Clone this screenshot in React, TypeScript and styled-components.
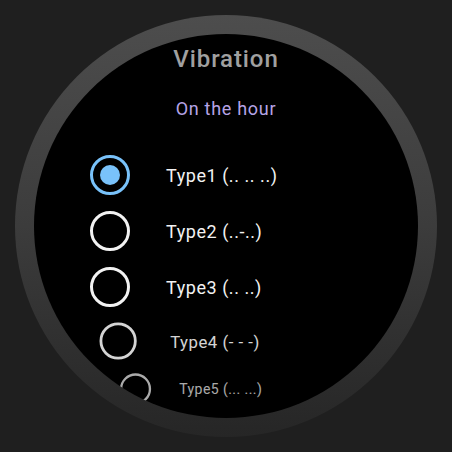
import React from 'react';
import styled, { createGlobalStyle } from 'styled-components';

const colors = {
  background: '#1f1f1f',
  screen: '#000000',
  title: '#a0a0a0',
  subtitle: '#b6a4e6',
  text: '#f2f2f2',
  accent: '#79c2fa',
};

const GlobalStyle = createGlobalStyle`
  html, body {
    margin: 0;
    padding: 0;
    background: ${colors.background};
  }
  body {
    font-family: Roboto, 'Noto Sans', sans-serif;
  }
`;

const Page = styled.div`
  width: 452px;
  height: 452px;
  display: flex;
  align-items: center;
  justify-content: center;
  background: ${colors.background};
`;

const Bezel = styled.div`
  width: 422px;
  height: 422px;
  border-radius: 50%;
  padding: 19px;
  box-sizing: border-box;
  background: linear-gradient(180deg, #4d4d4d 0%, #3c3c3c 50%, #262626 100%);
`;

const Screen = styled.div`
  width: 100%;
  height: 100%;
  border-radius: 50%;
  overflow: hidden;
  background: ${colors.screen};
  display: flex;
  flex-direction: column;
  align-items: center;
  padding-top: 11px;
  box-sizing: border-box;
`;

const Title = styled.h1`
  margin: 0;
  font-size: 24px;
  font-weight: 500;
  letter-spacing: 0.9px;
  color: ${colors.title};
  line-height: 28px;
`;

const Subtitle = styled.h2`
  margin: 26px 0 28px;
  font-size: 18px;
  font-weight: 400;
  letter-spacing: 0.7px;
  color: ${colors.subtitle};
  line-height: 20px;
`;

const List = styled.div`
  width: 100%;
  display: flex;
  flex-direction: column;
`;

const Row = styled.div<{ $scale: number; $fade: number }>`
  height: ${(p) => 56 * p.$scale}px;
  display: flex;
  align-items: center;
  gap: 36px;
  padding-left: 56px;
  transform: scale(${(p) => p.$scale});
  transform-origin: 192px 50%;
  opacity: ${(p) => p.$fade};
`;

const Radio = styled.div<{ $checked?: boolean }>`
  width: 40px;
  height: 40px;
  flex: none;
  box-sizing: border-box;
  border-radius: 50%;
  border: 3.5px solid ${(p) => (p.$checked ? colors.accent : colors.text)};
  display: flex;
  align-items: center;
  justify-content: center;

  &::after {
    content: '';
    display: ${(p) => (p.$checked ? 'block' : 'none')};
    width: 20px;
    height: 20px;
    border-radius: 50%;
    background: ${colors.accent};
  }
`;

const Label = styled.span`
  font-size: 18px;
  letter-spacing: 0.55px;
  color: ${colors.text};
  white-space: nowrap;
`;

const options = [
  { label: 'Type1 (.. .. ..)', scale: 1, fade: 1 },
  { label: 'Type2 (..-..)', scale: 1, fade: 1 },
  { label: 'Type3 (.. ..)', scale: 1, fade: 1 },
  { label: 'Type4 (- - -)', scale: 0.93, fade: 0.88 },
  { label: 'Type5 (... ...)', scale: 0.78, fade: 0.7 },
];

export const VibrationScreen = () => {
  const selected = 0;
  return (
    <Page>
      <GlobalStyle />
      <Bezel>
        <Screen>
          <Title>Vibration</Title>
          <Subtitle>On the hour</Subtitle>
          <List>
            {options.map((o, i) => (
              <Row key={o.label} $scale={o.scale} $fade={o.fade}>
                <Radio $checked={i === selected} />
                <Label>{o.label}</Label>
              </Row>
            ))}
          </List>
        </Screen>
      </Bezel>
    </Page>
  );
};

export default VibrationScreen;
